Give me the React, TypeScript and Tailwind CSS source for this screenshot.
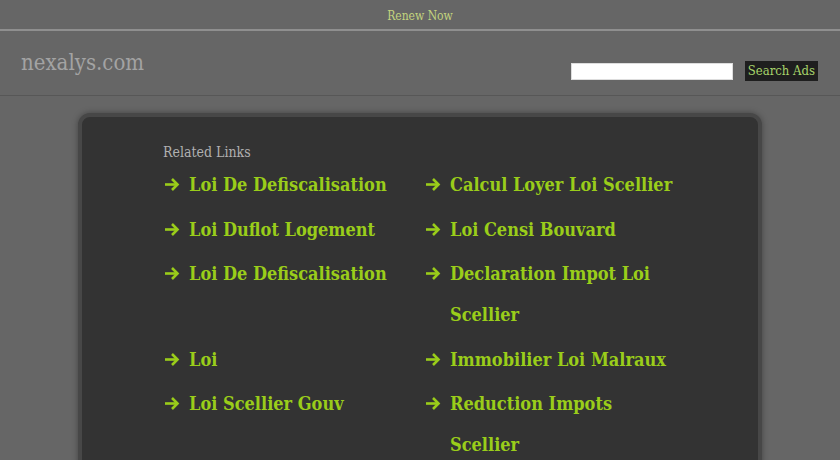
const links = [
  "Loi De Defiscalisation",
  "Calcul Loyer Loi Scellier",
  "Loi Duflot Logement",
  "Loi Censi Bouvard",
  "Loi De Defiscalisation",
  "Declaration Impot Loi Scellier",
  "Loi",
  "Immobilier Loi Malraux",
  "Loi Scellier Gouv",
  "Reduction Impots Scellier",
];

const serif = { fontFamily: '"DejaVu Serif", "Liberation Serif", serif' };

function Arrow() {
  return (
    <svg width="16" height="14" viewBox="0 0 16 14" className="mt-[13px]">
      <path d="M1 7.5 H13" stroke="#9acd1a" strokeWidth="2.6" fill="none" />
      <path d="M8 2 L13.5 7.5 L8 13" stroke="#9acd1a" strokeWidth="2.6" fill="none" />
    </svg>
  );
}

function LinkItem({ label }: { label: string }) {
  return (
    <li className="flex mb-[3.5px]">
      <span className="w-[26px] shrink-0 pl-[1px]">
        <Arrow />
      </span>
      <a href="#" className="text-[18px] leading-[41px] font-bold font-stretch-condensed text-[#9acd1a] no-underline">
        {label}
      </a>
    </li>
  );
}

export default function App() {
  return (
    <div className="w-[840px] h-[460px] overflow-hidden bg-[#666666]" style={serif}>
      <div className="h-[31px] pt-[2px] flex items-center justify-center text-[12px] font-stretch-condensed text-[#c3d47e] border-b-2 border-[#8f8f8f]">
        Renew Now
      </div>
      <div className="h-[65px] flex items-start justify-between border-b border-[#575757] px-[21px]">
        <div className="pt-[15px] text-[22px] font-stretch-condensed text-[#a3a3a3]">nexalys.com</div>
        <div className="flex items-center gap-[12px] pt-[30px] pr-[1px]">
          <input className="w-[162px] h-[17px] bg-white border border-[#ddd] outline-none" />
          <button className="h-[20px] px-[3px] bg-[#1e1e1e] text-[#a7d46a] text-[13px] font-stretch-condensed leading-[20px]">Search Ads</button>
        </div>
      </div>
      <div className="pt-[17px] px-[78px]">
        <div className="h-[400px] rounded-[12px] bg-[#333333] border-[4px] border-[#474747] shadow-[0_0_6px_rgba(0,0,0,0.35)] pl-[81px] pt-[25px]">
          <div className="text-[14px] font-stretch-condensed text-[#b0b0b0]">Related Links</div>
          <ul className="grid grid-cols-[261px_261px] mt-[1px] text-[#9acd1a]">
            {links.map((l, i) => (
              <LinkItem key={i} label={l} />
            ))}
          </ul>
        </div>
      </div>
    </div>
  );
}
